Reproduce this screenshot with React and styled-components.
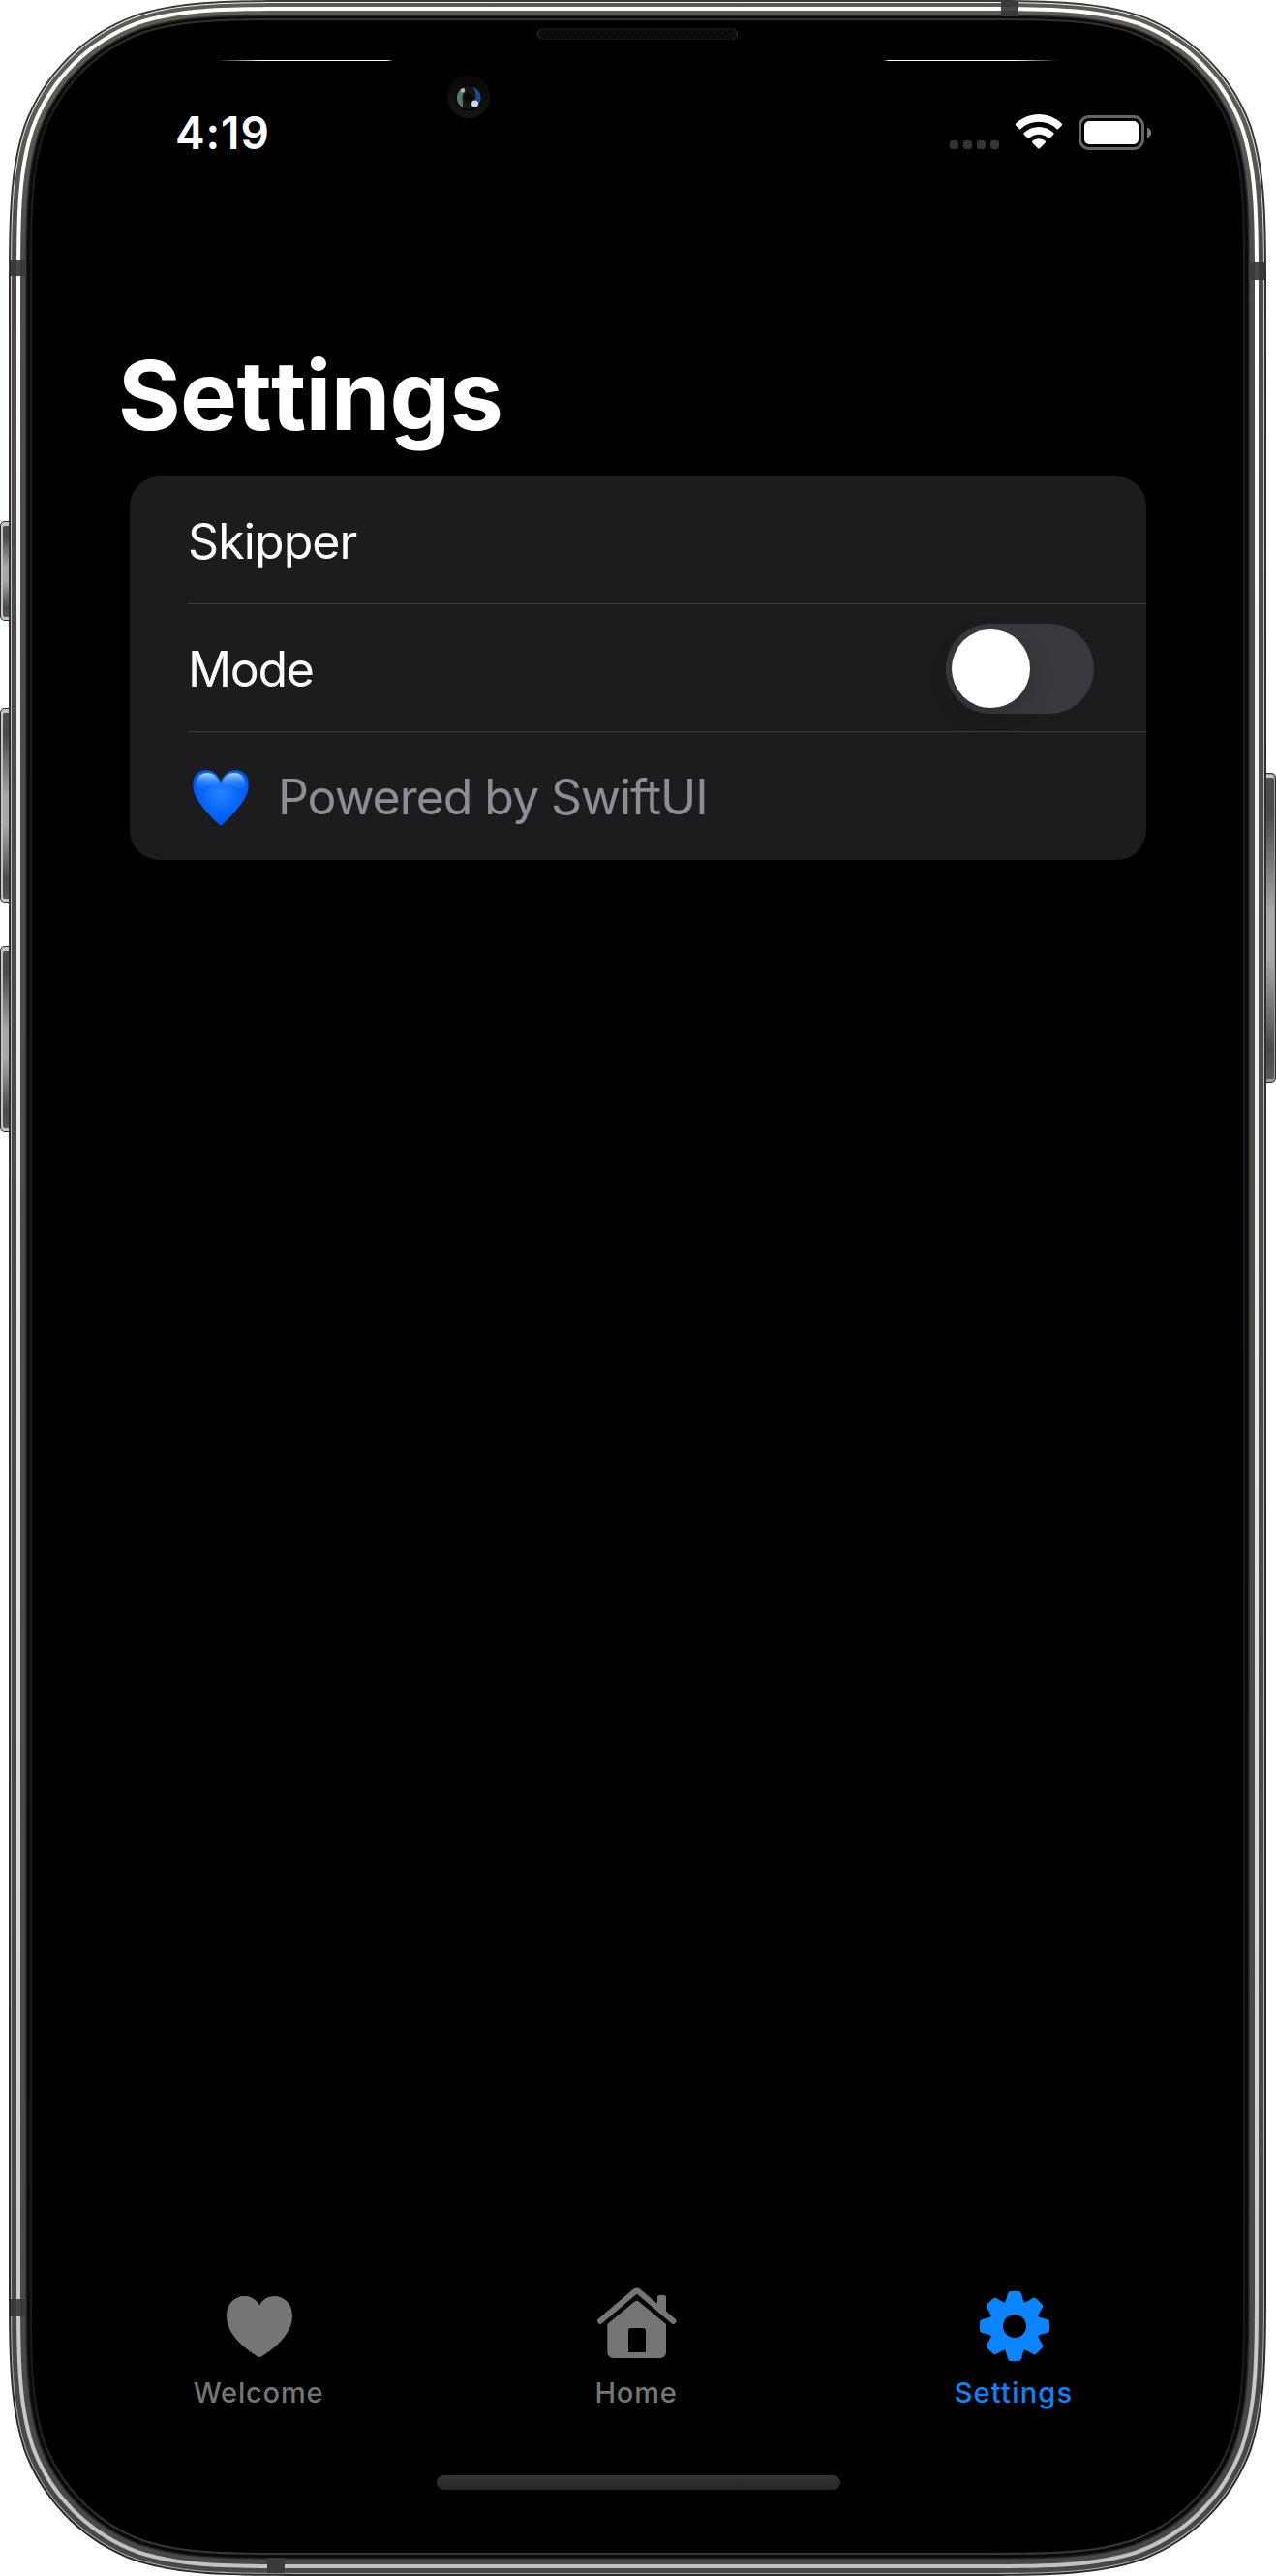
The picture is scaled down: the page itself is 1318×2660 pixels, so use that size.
import React from "react";
import styled, { createGlobalStyle } from "styled-components";

const GlobalStyle = createGlobalStyle`
  html, body { margin: 0; padding: 0; background: #fff; }
  * { box-sizing: border-box; }
`;

const Phone = styled.div`
  position: relative;
  width: 1318px;
  height: 2660px;
  overflow: hidden;
  background: #fff;
  font-family: Inter, "Liberation Sans", sans-serif;
`;

const Artwork = styled.svg`
  position: absolute;
  inset: 0;
  display: block;
`;

const Screen = styled.div`
  position: relative;
  display: flex;
  flex-direction: column;
  height: 100%;
  padding: 108px 73px 89px 72px;
`;

const StatusBar = styled.header`
  display: flex;
  align-items: center;
  justify-content: space-between;
  height: 58px;
  padding: 0 54px 0 109px;
`;

const Time = styled.span`
  font-size: 46px;
  line-height: 58px;
  font-weight: 600;
  letter-spacing: 0.9px;
  color: #fff;
`;

const StatusIcons = styled.div`
  display: flex;
  align-items: center;
`;

const Title = styled.h1`
  margin: 180px 0 0 50px;
  height: 124px;
  font-size: 99px;
  line-height: 124px;
  font-weight: 700;
  font-kerning: none;
  font-feature-settings: "calt" 0, "liga" 0;
  letter-spacing: -0.7px;
  color: #fff;
`;

const Card = styled.section`
  width: 1050px;
  margin: 22px 0 0 62px;
  border-radius: 31px;
  background: #1c1c1e;
  overflow: hidden;
`;

const Row = styled.div`
  display: flex;
  align-items: center;
  height: 132px;
  margin-left: 60px;
  padding-right: 54px;
  border-bottom: ${(p) => (p.$last ? "0" : "1px solid #3d3d40")};
`;

const RowLabel = styled.span`
  flex: 1;
  padding-top: 2px;
  font-size: 50px;
  line-height: 60px;
  font-weight: 400;
  letter-spacing: ${(p) => p.$track || 0}px;
  color: ${(p) => (p.$muted ? "#8d8d93" : "#fff")};
`;

const Switch = styled.button`
  display: flex;
  align-items: center;
  width: 153px;
  height: 93px;
  margin-top: 1px;
  padding: 6px;
  border: 0;
  border-radius: 47px;
  background: #39383d;
`;

const Knob = styled.span`
  width: 81px;
  height: 81px;
  border-radius: 50%;
  background: #fff;
  box-shadow: 0 9px 24px rgba(0, 0, 0, 0.15);
`;

const HeartIcon = styled.svg`
  margin: 4px 30px 0 5px;
  flex: none;
`;

const TabBar = styled.nav`
  display: flex;
  width: 1170px;
  margin-top: auto;
  height: 140px;
  margin-bottom: 57px;
`;

const Tab = styled.a`
  flex: 1;
  display: flex;
  flex-direction: column;
  align-items: center;
  color: ${(p) => (p.$active ? "#0a84ff" : "#757575")};
`;

const TabIcon = styled.svg`
  display: block;
  width: 84px;
  height: 80px;
`;

const TabLabel = styled.span`
  margin-top: 14px;
  font-size: 29px;
  line-height: 36px;
  font-weight: 500;
  letter-spacing: ${(p) => p.$track}px;
`;

const HomeIndicator = styled.div`
  width: 417px;
  height: 15px;
  margin-left: 379px;
  border-radius: 8px;
  background: linear-gradient(#343434, #262626);
`;

/* Rounded rectangle with continuous-curvature corners. */
function squircle(l, t, r, b, rad) {
  const p = (sx, sy, ox, oy) => (x, y) =>
    `${(ox + sx * x * rad).toFixed(2)} ${(oy + sy * y * rad).toFixed(2)}`;
  const k = [
    [1.528665, 0],
    [1.088493, 0],
    [0.868407, 0],
    [0.631494, 0.074911],
    [0.372824, 0.169059],
    [0.169059, 0.372824],
    [0.074911, 0.631494],
    [0, 0.868407],
    [0, 1.088493],
    [0, 1.528665],
  ];
  const corner = (sx, sy, ox, oy, rev) => {
    const f = p(sx, sy, ox, oy);
    const q = (rev ? [...k].reverse() : k).map(([x, y]) => f(x, y));
    return `L${q[0]}C${q[1]} ${q[2]} ${q[3]}C${q[4]} ${q[5]} ${q[6]}C${q[7]} ${q[8]} ${q[9]}`;
  };
  return (
    "M" + p(1, 1, l, t)(0, 1.6) +
    corner(1, 1, l, t, true) +
    corner(-1, 1, r, t, false) +
    corner(-1, -1, r, b, true) +
    corner(1, -1, l, b, false) +
    "Z"
  );
}

/* Frame layers from the outside in: [side and bottom inset, top inset, fill]. */
const LAYERS = [
  [0, 0, "url(#edge)"],
  [2, 2, "url(#hairline)"],
  [3, 3, "url(#steel)"],
  [8, 7, "url(#shine)"],
  [12, 11, "url(#steel)"],
  [17, 15, "#343332"],
  [18, 16, "#1f1f1f"],
  [19, 17, "#0a0a0a"],
  [22, 19, "url(#lip)"],
  [24, 21, "#000"],
];

function SideButton({ x, y, h, right }) {
  return (
    <g transform={right ? `translate(${x + 12} ${y}) scale(-1 1)` : `translate(${x} ${y})`}>
      <rect width="16" height={h} rx="5" fill="#2c2c2d" />
      <rect x="1" y="1" width="15" height={h - 2} rx="4" fill={right ? "#9a9a9a" : "#c4c2c2"} />
      {right && <rect x="3" y="2" width="13" height="3" fill="#c8c8c8" />}
      <rect x={right ? 2 : 3} y="5" width="14" height={h - 9} rx="2" fill="url(#button)" />
    </g>
  );
}

function Grad({ id, stops }) {
  return (
    <linearGradient id={id} gradientUnits="userSpaceOnUse" x1="0" y1="0" x2="0" y2="2660">
      {stops.map(([o, c]) => (
        <stop key={o} offset={o} stopColor={c} />
      ))}
    </linearGradient>
  );
}

function DeviceFrame() {
  return (
    <Artwork width="1318" height="2660" viewBox="0 0 1318 2660" aria-hidden="true">
      <defs>
        <Grad id="edge" stops={[[0, "#3a3a3a"], [0.1, "#303032"], [1, "#29292b"]]} />
        <Grad id="hairline" stops={[[0, "#f4f8f7"], [0.1, "#d2d4d4"], [0.3, "#bdbdbd"], [1, "#b0b0b0"]]} />
        <Grad id="steel" stops={[[0, "#5f5a54"], [0.05, "#5d5954"], [0.1, "#4c4b4a"], [1, "#484848"]]} />
        <Grad id="shine" stops={[[0, "#fff"], [0.12, "#fff"], [0.2, "#f3f3f3"], [0.45, "#ececec"], [0.88, "#cdcdcd"], [1, "#c3c2c3"]]} />
        <Grad id="lip" stops={[[0, "#353535"], [0.05, "#1c1c1c"], [0.92, "#1a1a1a"], [0.97, "#303030"], [1, "#3a3a3a"]]} />
        <linearGradient id="button" x1="0" y1="0" x2="0" y2="1">
          <stop offset="0" stopColor="#4e4e4e" />
          <stop offset="0.12" stopColor="#4a4a4a" />
          <stop offset="0.45" stopColor="#a8a8a8" />
          <stop offset="0.6" stopColor="#a8a8a8" />
          <stop offset="0.9" stopColor="#4a4a4a" />
          <stop offset="1" stopColor="#585858" />
        </linearGradient>
        <linearGradient id="flareLeft">
          <stop offset="0" stopColor="#fff" stopOpacity="0" />
          <stop offset="0.25" stopColor="#fff" />
          <stop offset="0.97" stopColor="#fff" />
          <stop offset="1" stopColor="#fff" stopOpacity="0.2" />
        </linearGradient>
        <linearGradient id="flareRight" x1="1" x2="0">
          <stop offset="0" stopColor="#fff" stopOpacity="0" />
          <stop offset="0.25" stopColor="#fff" />
          <stop offset="0.97" stopColor="#fff" />
          <stop offset="1" stopColor="#fff" stopOpacity="0.2" />
        </linearGradient>
        <linearGradient id="speakerRim">
          <stop offset="0" stopColor="#3a3a3a" />
          <stop offset="0.03" stopColor="#141414" />
          <stop offset="0.97" stopColor="#141414" />
          <stop offset="1" stopColor="#3a3a3a" />
        </linearGradient>
        <linearGradient id="cameraRing" x1="0" y1="0" x2="0" y2="1">
          <stop offset="0" stopColor="#070707" />
          <stop offset="1" stopColor="#161616" />
        </linearGradient>
        <pattern id="mesh" width="4" height="4" patternUnits="userSpaceOnUse">
          <rect width="4" height="4" fill="#0f0f0f" />
          <rect width="2" height="2" fill="#0a0a0a" />
          <rect x="2" y="2" width="2" height="2" fill="#0a0a0a" />
        </pattern>
      </defs>

      <SideButton x={0} y={538} h={103} />
      <SideButton x={0} y={731} h={201} />
      <SideButton x={0} y={977} h={192} />
      <SideButton x={1306} y={798} h={320} right />

      {LAYERS.map(([d, t, fill]) => (
        <path key={d} d={squircle(9 + d, t, 1308 - d, 2660 - d, 206 - d)} fill={fill} />
      ))}

      <g fill="#3a3a3a">
        <rect x="11" y="268" width="16" height="17" />
        <rect x="11" y="2374" width="16" height="18" />
        <rect x="1290" y="271" width="16" height="18" />
        <rect x="1034" y="2" width="18" height="15" />
        <rect x="276" y="2641" width="18" height="16" />
      </g>
      <g fill="#484848">
        <rect x="17" y="268" width="4" height="17" />
        <rect x="17" y="2374" width="4" height="18" />
        <rect x="1296" y="271" width="4" height="18" />
        <rect x="1034" y="7" width="18" height="4" />
      </g>

      <rect x="224" y="62" width="181" height="1" fill="url(#flareLeft)" />
      <rect x="913" y="62" width="181" height="1" fill="url(#flareRight)" />
      <rect x="555.5" y="29.5" width="206" height="11" rx="5.5" fill="url(#mesh)" stroke="url(#speakerRim)" />

      <circle cx="484" cy="100" r="22" fill="url(#cameraRing)" />
      <circle cx="484" cy="101" r="13.5" fill="#020202" />
      <circle cx="484" cy="101" r="12" fill="#151314" />
      <circle cx="484" cy="101" r="4.5" fill="#090909" />
      <path d="M479 90.500Q472 93 471.700 101Q472 108 478 111Q478.500 106 477.500 101Q477.500 96 480 92Z" fill="#54796a" />
      <path d="M488.500 89.500Q496.500 93 496.800 101Q496.500 108 491 111L488 108Q491.500 104 491.500 99Q491.500 94 488.500 89.500Z" fill="#1a4b88" />
      <circle cx="478" cy="93.500" r="2.300" fill="#a9b8b0" />
      <circle cx="490.500" cy="107" r="3.500" fill="#d7d2ea" />
    </Artwork>
  );
}

function StatusGlyphs() {
  return (
    <StatusIcons>
      <svg width="212" height="40" viewBox="979 117 212 40">
        <g fill="#343434">
          {[981, 995, 1009, 1023].map((x) => (
            <rect key={x} x={x} y="145" width="9" height="9" rx="3" />
          ))}
        </g>
        <g fill="#fff">
          <path d="M1073 118C1082 118 1090.500 121.600 1096.700 127.400Q1097.700 128.400 1096.800 129.400L1093.200 133Q1092.300 133.800 1091.300 132.900A27 27 0 0 0 1054.700 132.900Q1053.700 133.800 1052.800 133L1049.200 129.400Q1048.300 128.400 1049.300 127.400C1055.500 121.600 1064 118 1073 118Z" />
          <path d="M1073 131C1078.800 131 1084 133.200 1088.200 136.900Q1089.200 137.900 1088.200 138.900L1084.600 142.400Q1083.600 143.200 1082.600 142.400A14.800 14.800 0 0 0 1063.400 142.400Q1062.400 143.200 1061.400 142.400L1057.800 138.900Q1056.800 137.900 1057.800 136.900C1062 133.200 1067.200 131 1073 131Z" />
          <path d="M1073 143.300C1075.500 143.300 1077.800 144.200 1079.600 145.600Q1080.500 146.500 1079.600 147.400L1073.900 153.300Q1073 154.200 1072.100 153.300L1066.400 147.400Q1065.500 146.500 1066.400 145.600C1068.200 144.200 1070.500 143.300 1073 143.300Z" />
        </g>
        <rect x="1115.500" y="120.500" width="65" height="33" rx="9.500" fill="none" stroke="#666" strokeWidth="3" />
        <rect x="1120" y="125" width="56" height="24" rx="5" fill="#fff" />
        <path d="M1185 131.500C1190.500 133.500 1190.500 140.500 1185 142.500Z" fill="#777" />
      </svg>
    </StatusIcons>
  );
}

function BlueHeart() {
  const shape =
    "M29 57.500C26 56 10 40 4 29C-0.500 21 -1 11 3 5.500C8 -1 18 -1.500 24 4.500C26.500 7 28 10 29 13C30 10 31.500 7 34 4.500C40 -1.500 50 -1 55 5.500C59 11 58.500 21 54 29C48 40 32 56 29 57.500Z";
  return (
    <HeartIcon width="58" height="58" viewBox="0 0 58 58" aria-label="Blue heart">
      <defs>
        <radialGradient id="heartBody" cx="0.5" cy="0.42" r="0.6">
          <stop offset="0" stopColor="#2a84ff" />
          <stop offset="0.55" stopColor="#0668fa" />
          <stop offset="1" stopColor="#0150ef" />
        </radialGradient>
        <linearGradient id="heartGloss" x1="0" y1="0" x2="0" y2="1">
          <stop offset="0" stopColor="#b9dcff" />
          <stop offset="0.4" stopColor="#6bb0ff" stopOpacity="0.5" />
          <stop offset="0.9" stopColor="#3b8eff" stopOpacity="0" />
        </linearGradient>
      </defs>
      <path d={shape} fill="url(#heartBody)" />
      <path d="M15 3C22 3 27 8 28 15C20 15 9 18 5 23C1 13 5 3 15 3Z" fill="url(#heartGloss)" />
      <path d="M43 3C36 3 31 8 30 15C38 15 49 18 53 23C57 13 53 3 43 3Z" fill="url(#heartGloss)" />
    </HeartIcon>
  );
}

function TabHeart() {
  return (
    <TabIcon viewBox="225 2359 84 80">
      <path
        fill="currentColor"
        d="M268 2434C266.500 2434 264 2432 262 2430.700C245 2419.500 234 2406 234 2391.500C234 2379 242.500 2371 252.500 2371C259.500 2371 265 2374.800 268 2380.500C271 2374.800 276.500 2371 283.500 2371C293.500 2371 302 2379 302 2391.500C302 2406 291 2419.500 274 2430.700C272 2432 269.500 2434 268 2434Z"
      />
    </TabIcon>
  );
}

function TabHouse() {
  return (
    <TabIcon viewBox="615 2359 84 80">
      <path
        d="M620 2396.700L655.500 2366.600Q657.700 2364.700 659.900 2366.600L695.400 2396.700"
        fill="none"
        stroke="currentColor"
        strokeWidth="6"
        strokeLinecap="round"
        strokeLinejoin="round"
      />
      <path d="M679 2381V2372Q679 2370 681 2370H686Q688 2370 688 2372V2389Z" fill="currentColor" />
      <path
        fill="currentColor"
        fillRule="evenodd"
        d="M627.300 2400L656 2376.300Q657.700 2375 659.400 2376.300L688 2400V2428.500Q688 2435 681.500 2435H633.800Q627.300 2435 627.300 2428.500ZM649 2429H667V2406.500Q667 2404 664.500 2404H651.500Q649 2404 649 2406.500Z"
      />
    </TabIcon>
  );
}

function TabGear() {
  const tooth =
    "M-12 -20C-9.500 -25.500 -8.800 -26 -7.600 -31.500Q-6.800 -36 -4 -36H4Q6.800 -36 7.600 -31.500C8.800 -26 9.500 -25.500 12 -20Z";
  return (
    <TabIcon viewBox="-43 -43 84 80">
      <circle r="19" fill="none" stroke="currentColor" strokeWidth="14" />
      {[0, 45, 90, 135, 180, 225, 270, 315].map((a) => (
        <path key={a} d={tooth} transform={`rotate(${a})`} fill="currentColor" />
      ))}
    </TabIcon>
  );
}

export default function App() {
  return (
    <Phone>
      <GlobalStyle />
      <DeviceFrame />
      <Screen>
        <StatusBar>
          <Time>4:19</Time>
          <StatusGlyphs />
        </StatusBar>
        <Title>Settings</Title>
        <Card>
          <Row>
            <RowLabel $track={-0.9}>Skipper</RowLabel>
          </Row>
          <Row>
            <RowLabel $track={-1.3}>Mode</RowLabel>
            <Switch type="button" role="switch" aria-checked="false" aria-label="Mode">
              <Knob />
            </Switch>
          </Row>
          <Row $last>
            <BlueHeart />
            <RowLabel $muted $track={-1.05}>Powered by SwiftUI</RowLabel>
          </Row>
        </Card>
        <TabBar>
          <Tab>
            <TabHeart />
            <TabLabel $track={0.8}>Welcome</TabLabel>
          </Tab>
          <Tab>
            <TabHouse />
            <TabLabel $track={0.8}>Home</TabLabel>
          </Tab>
          <Tab $active>
            <TabGear />
            <TabLabel $track={1.2}>Settings</TabLabel>
          </Tab>
        </TabBar>
        <HomeIndicator />
      </Screen>
    </Phone>
  );
}
